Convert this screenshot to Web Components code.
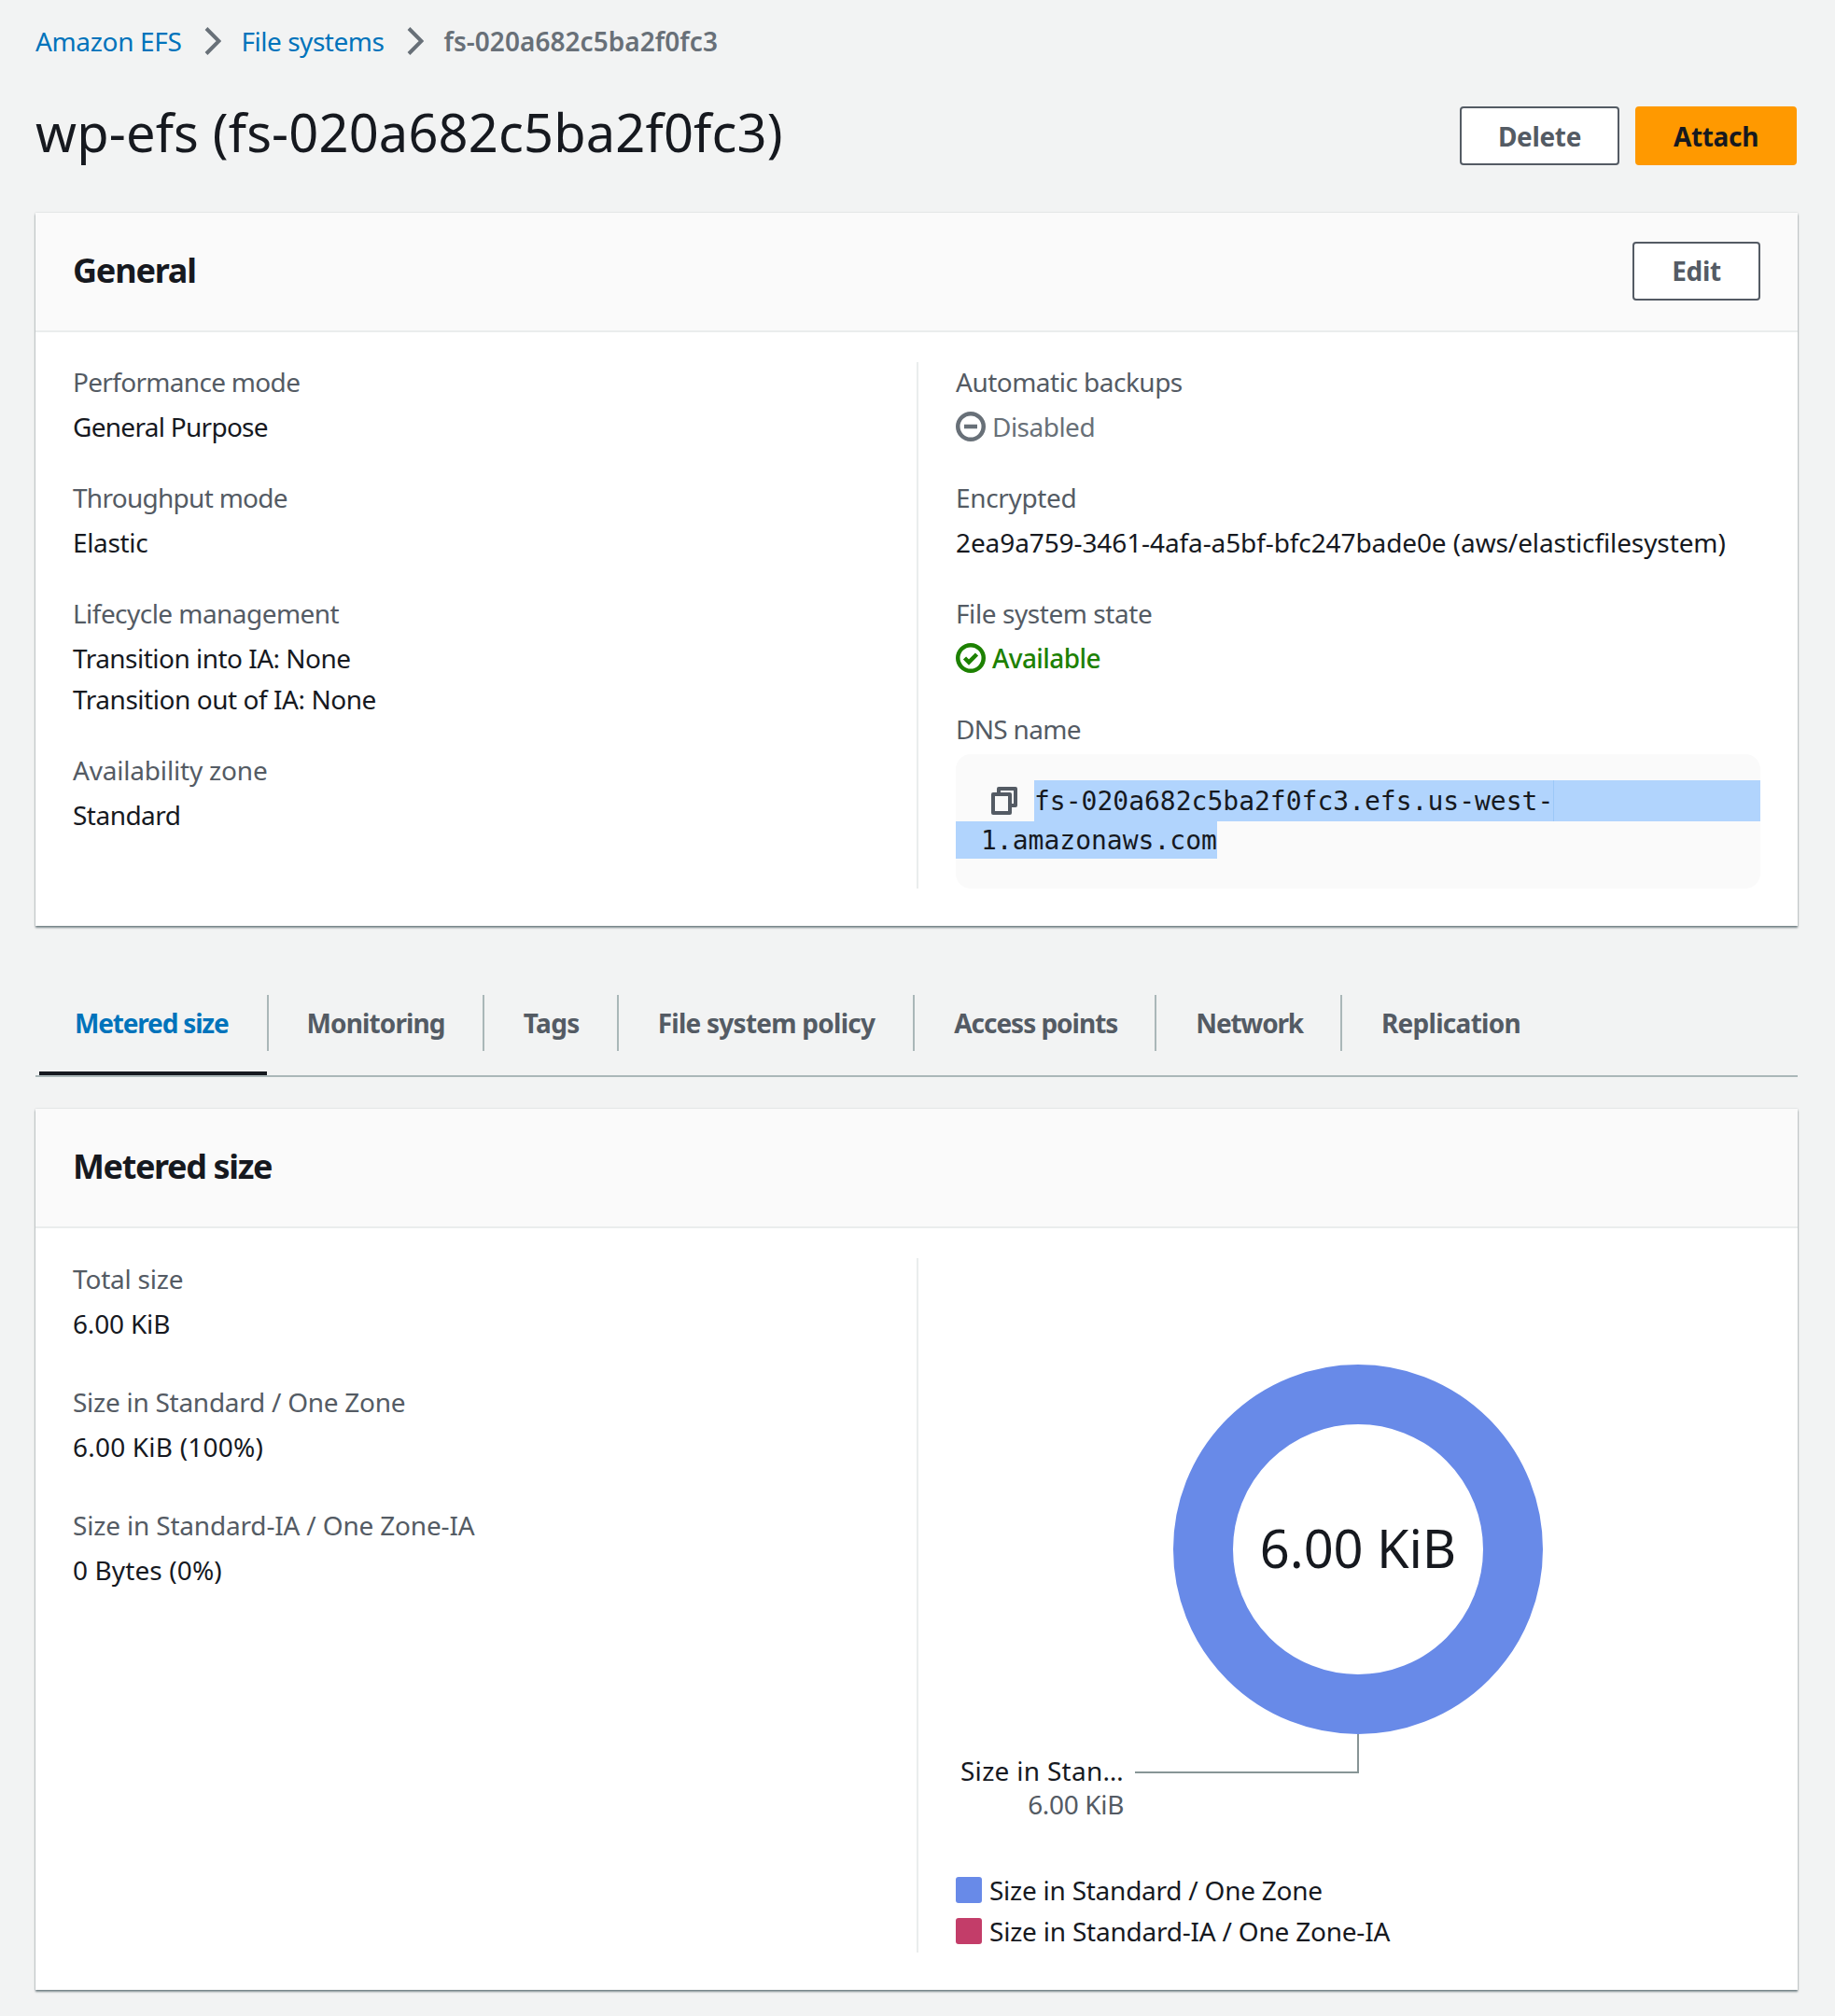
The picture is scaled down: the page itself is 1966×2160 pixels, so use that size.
<!DOCTYPE html>
<html lang="en">
<head>
<meta charset="utf-8">
<title>wp-efs</title>
<style>
html,body{margin:0;padding:0;background:#f2f3f3;}
body{font-family:"Noto Sans","Open Sans",sans-serif;font-size:28px;line-height:40px;color:#16191f;width:1966px;height:2160px;overflow:hidden;}
</style>
</head>
<body>
<efs-page>
  <efs-breadcrumbs></efs-breadcrumbs>
  <efs-header></efs-header>
  <efs-card heading="General" hs="-1.19">
    <efs-button slot="actions" w="137">Edit</efs-button>
    <efs-columns>
      <div slot="left" style="padding-top:1px">
        <efs-kv label="Performance mode" ls="-.69"><div style="letter-spacing:-.72px">General Purpose</div></efs-kv>
        <efs-kv label="Throughput mode" ls="-.72"><div style="letter-spacing:-.35px">Elastic</div></efs-kv>
        <efs-kv label="Lifecycle management" ls="-.55"><div style="letter-spacing:-.52px">Transition into IA: None</div><div style="margin-top:4px;letter-spacing:-.45px">Transition out of IA: None</div></efs-kv>
        <efs-kv label="Availability zone" ls="-.19"><div style="letter-spacing:-.52px">Standard</div></efs-kv>
      </div>
      <div slot="right" style="padding-top:1px">
        <efs-kv label="Automatic backups" ls="-.51"><efs-status kind="disabled" style="letter-spacing:-.52px">Disabled</efs-status></efs-kv>
        <efs-kv label="Encrypted" ls="-.35"><div style="letter-spacing:-.1px">2ea9a759-3461-4afa-a5bf-bfc247bade0e (aws/elasticfilesystem)</div></efs-kv>
        <efs-kv label="File system state" ls="-.43"><efs-status kind="ok" style="letter-spacing:-.58px">Available</efs-status></efs-kv>
        <efs-kv label="DNS name" ls="-.69" tight last><efs-dns></efs-dns></efs-kv>
      </div>
    </efs-columns>
  </efs-card>
  <efs-tabs></efs-tabs>
  <efs-card heading="Metered size" hs="-1.37">
    <efs-columns>
      <div slot="left" style="padding-top:2px">
        <efs-kv label="Total size" ls="-.21" wide><div style="letter-spacing:-.18px">6.00 KiB</div></efs-kv>
        <efs-kv label="Size in Standard / One Zone" ls="-.27" wide><div style="letter-spacing:.2px">6.00 KiB (100%)</div></efs-kv>
        <efs-kv label="Size in Standard-IA / One Zone-IA" ls="-.18" wide><div style="letter-spacing:.11px">0 Bytes (0%)</div></efs-kv>
      </div>
      <efs-donut slot="right"></efs-donut>
    </efs-columns>
  </efs-card>
</efs-page>
<script>
const FONT='"Noto Sans","Open Sans",sans-serif';
function def(name,css,html){
  customElements.define(name,class extends HTMLElement{
    constructor(){super();this.attachShadow({mode:'open'});}
    connectedCallback(){
      this.shadowRoot.innerHTML='<style>'+css+'</style>'+(typeof html==='function'?html(this):html);
    }
  });
}
def('efs-page',':host{display:block;padding:24px 40px 0 38px;}','<slot></slot>');
const chev='<svg width="18" height="30" viewBox="0 0 18 30" fill="none" stroke="#687078" stroke-width="4"><path d="M2 1.5 15.5 15 2 28.5"/></svg>';
def('efs-breadcrumbs',`:host{display:flex;align-items:center;height:40px;letter-spacing:-.35px;}
a{color:#0073bb;text-decoration:none;}
a+svg+a{letter-spacing:-.47px;}
svg{display:block;margin:0 21px 0 25px;}
b{font-weight:600;color:#687078;letter-spacing:.05px;}`,`<a href="#">Amazon EFS</a>${chev}<a href="#">File systems</a>${chev}<b>fs-020a682c5ba2f0fc3</b>`);
def('efs-button',`:host{display:inline-flex;}
button{font:700 28px/40px ${FONT};letter-spacing:-.35px;height:63px;box-sizing:border-box;padding:0;border:2px solid #545b64;border-radius:4px;background:#fff;color:#545b64;}
:host([primary]) button{background:#f90;border-color:#f90;color:#16191f;}`,e=>`<button style="width:${e.getAttribute('w')}px"><slot></slot></button>`);
def('efs-header',`:host{display:flex;justify-content:space-between;align-items:center;height:63px;margin:50px 1px 51px 0;}
h1{margin:0 0 10px;font:400 56px/72px ${FONT};color:#16191f;letter-spacing:.15px;}
div{display:flex;gap:17px;}`,`<h1>wp-efs (fs-020a682c5ba2f0fc3)</h1><div><efs-button w="171">Delete</efs-button><efs-button w="173" primary>Attach</efs-button></div>`);
def('efs-card',`:host{display:block;background:#fff;box-shadow:0 2px 2px rgba(0,28,36,.5),0 0 2px rgba(0,28,36,.15);width:1888px;}
header{box-sizing:border-box;height:128px;display:flex;align-items:center;justify-content:space-between;padding:0 40px 2px;background:#fafafa;border-bottom:2px solid #eaeded;}
h2{margin:0;font:700 36px/44px ${FONT};color:#16191f;}
main{padding:32px 40px 40px;}`,e=>`<header><h2 style="letter-spacing:${e.getAttribute('hs')}px">${e.getAttribute('heading')}</h2><slot name="actions"></slot></header><main><slot></slot></main>`);
def('efs-columns',`:host{display:grid;grid-template-columns:1fr 1fr;}
::slotted([slot=right]){border-left:2px solid #eaeded;padding-left:40px;}`,`<slot name="left"></slot><slot name="right"></slot>`);
def('efs-kv',`:host{display:block;margin-bottom:36px;letter-spacing:-.35px;}
:host([wide]){margin-bottom:44px;}
:host([last]){margin-bottom:0;}
.l{color:#545b64;margin-bottom:8px;line-height:40px;}
:host([tight]) .l{margin-bottom:7px;}`,e=>`<div class="l" style="letter-spacing:${e.getAttribute('ls')}px">${e.getAttribute('label')}</div><slot></slot>`);
const icons={
 disabled:'<svg width="32" height="32" viewBox="0 0 32 32" fill="none" stroke="#687078" stroke-width="4.5"><circle cx="16" cy="16" r="13.75"/><path d="M9 16h14"/></svg>',
 ok:'<svg width="32" height="32" viewBox="0 0 32 32" fill="none" stroke="#1d8102" stroke-width="4.5"><circle cx="16" cy="16" r="13.75"/><path d="M9.5 16l4.5 4.5 8.5-8.5"/></svg>'
};
def('efs-status',`:host{display:flex;align-items:center;gap:7px;height:40px;}
:host([kind=disabled]){color:#687078;}
:host([kind=ok]){color:#1d8102;font-weight:500;}
svg{display:block;}`,e=>icons[e.getAttribute('kind')]+'<slot></slot>');
def('efs-dns',`:host{display:block;box-sizing:border-box;height:144px;padding-top:28px;background:#fafafa;border-radius:16px;font:28px/40px "DejaVu Sans Mono",monospace;letter-spacing:0;color:#16191f;}
.l1{display:flex;height:44px;align-items:center;}
.ic{width:84px;flex:none;display:flex;padding-left:38px;box-sizing:border-box;}
.sel{background:#b1d4fd;}
.l1 .sel{flex:1;height:44px;line-height:46px;}
.t{display:inline-block;height:44px;border-right:1px solid #9cc8f8;}
.l2{display:block;width:280px;height:40px;line-height:42px;box-sizing:border-box;padding-left:27px;white-space:nowrap;}
svg{display:block;}`,`<div class="l1"><span class="ic"><svg width="28" height="30" viewBox="0 0 28 30" fill="none" stroke="#545b64" stroke-width="4" stroke-linejoin="round"><path d="M8 6V2h18v18h-5"/><rect x="2" y="8" width="18" height="20"/></svg></span><span class="sel"><span class="t">fs-020a682c5ba2f0fc3.efs.us-west-</span></span></div><div class="l2 sel">1.amazonaws.com</div>`);
const tabs=[['Metered size',-1.17,''],['Monitoring',-.88,'padding-left:41px;'],['Tags',-.6,''],['File system policy',-.75,'padding-right:41px;'],['Access points',-1.02,''],['Network',-1.19,''],['Replication',-.72,'']];
def('efs-tabs',`:host{display:flex;margin-top:74px;height:86px;margin-bottom:34px;width:1888px;border-bottom:2px solid #aab7b8;}
a{display:block;box-sizing:border-box;height:60px;font:700 28px/60px ${FONT};color:#545b64;padding:0 40px 0 42px;border-right:2px solid #aab7b8;position:relative;white-space:nowrap;text-decoration:none;}
a:last-child{border-right:0;}
a.on{color:#0073bb;padding:0 41px 0 38px;margin-left:4px;}
a.on::after{content:"";position:absolute;left:0;right:0;top:82px;height:4px;background:#16191f;}`,tabs.map((t,i)=>`<a href="#" class="${i?'':'on'}" style="${t[2]}letter-spacing:${t[1]}px">${t[0]}</a>`).join(''));
def('efs-donut',`:host{display:block;border-left:2px solid #eaeded;padding-left:40px;height:744px;}
svg{display:block;width:862px;height:616px;}
text{font:28px ${FONT};letter-spacing:-.35px;}
.leg{display:flex;flex-direction:column;gap:4px;margin-top:41px;}
.leg div{display:flex;align-items:center;gap:8px;height:40px;}
.leg i{display:block;width:28px;height:28px;border-radius:3px;}`,`<svg viewBox="0 0 862 616"><circle cx="431" cy="312" r="166" fill="none" stroke="#688ae8" stroke-width="64"/><text x="431" y="332" text-anchor="middle" style="font-size:56px;letter-spacing:-.1px" fill="#16191f">6.00 KiB</text><path d="M431 510v41H192" fill="none" stroke="#879596" stroke-width="2"/><text x="180" y="560" text-anchor="end" fill="#16191f" style="letter-spacing:.29px">Size in Stan…</text><text x="180" y="596" text-anchor="end" fill="#545b64">6.00 KiB</text></svg><div class="leg"><div style="letter-spacing:-.25px"><i style="background:#688ae8"></i>Size in Standard / One Zone</div><div style="letter-spacing:-.22px"><i style="background:#c33d69"></i>Size in Standard-IA / One Zone-IA</div></div>`);
</script>
</body>
</html>
